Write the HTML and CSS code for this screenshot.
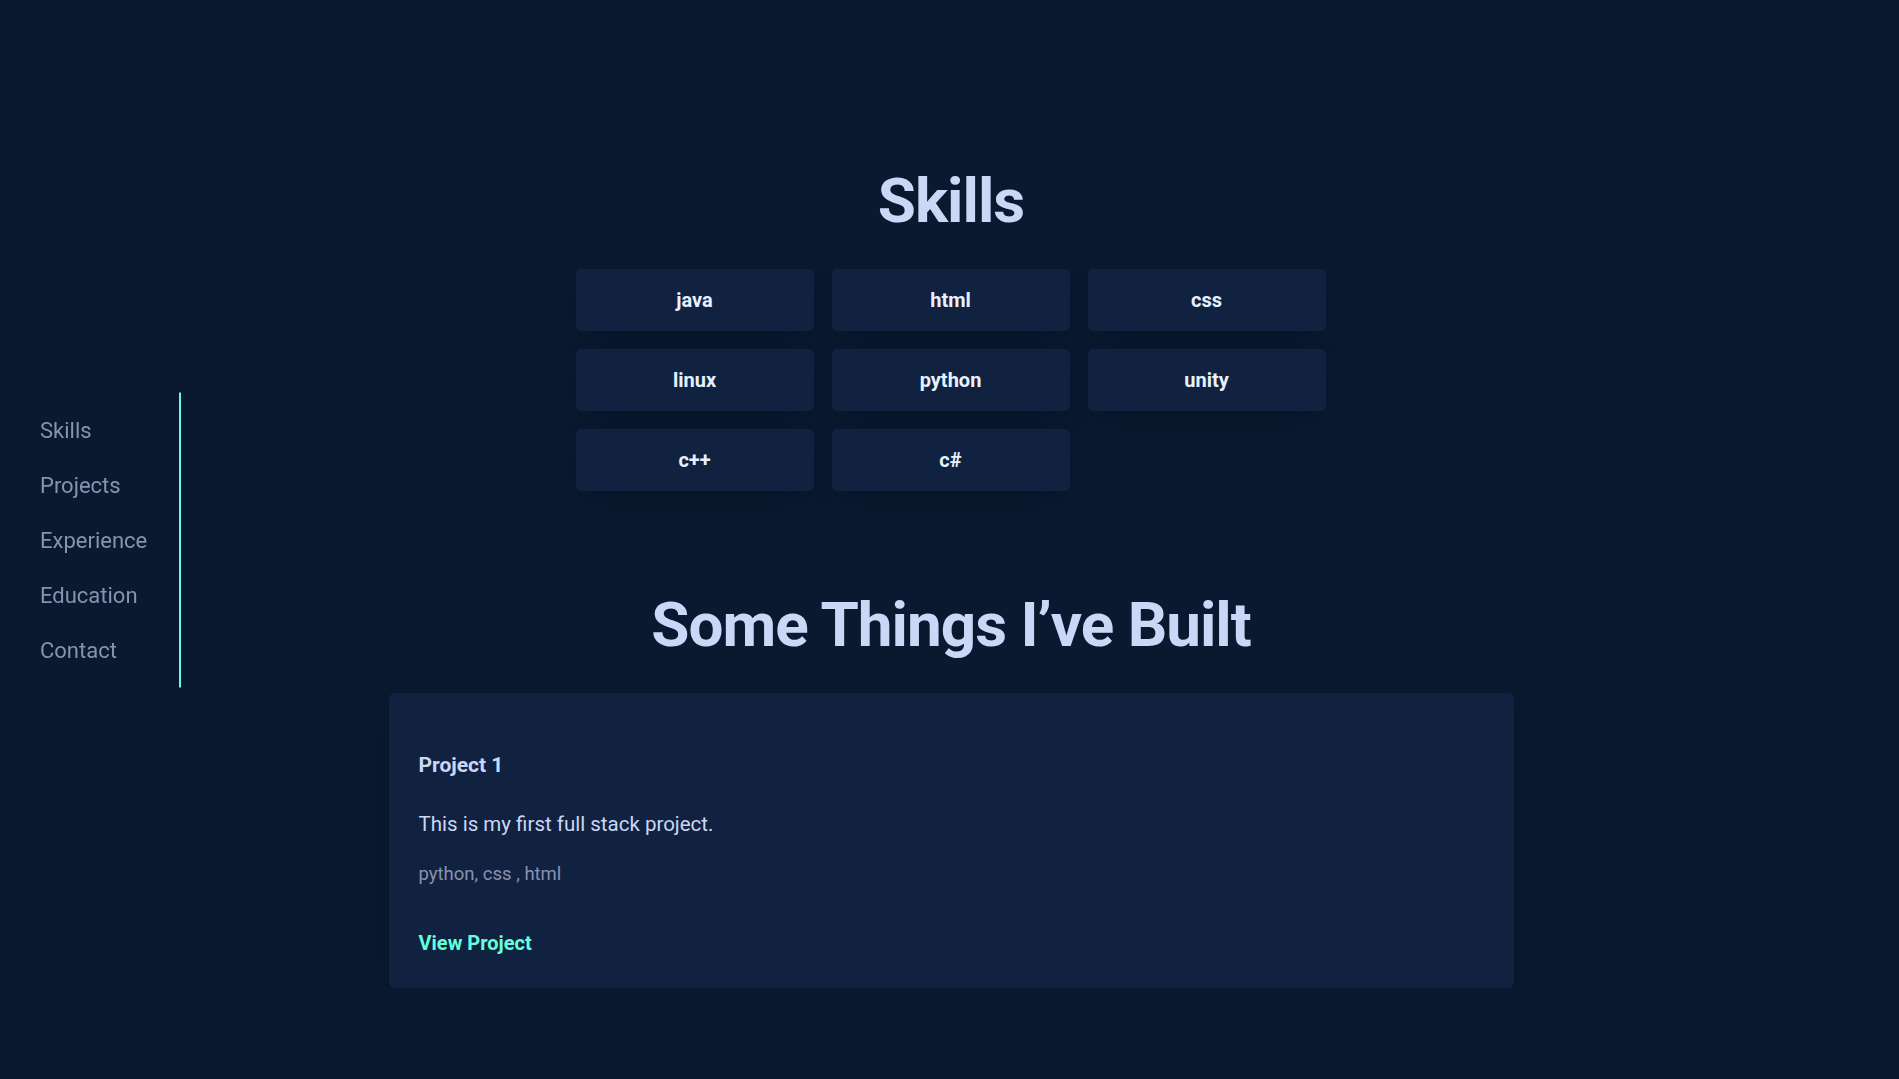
FILE: index.html
```html
<!DOCTYPE html>
<html lang="en">
<head>
<meta charset="utf-8">
<title>Portfolio</title>
<link rel="stylesheet" href="styles.css">
</head>
<body>
<nav class="side-nav">
  <ul class="side-list">
    <li><a href="#skills">Skills</a></li>
    <li><a href="#projects">Projects</a></li>
    <li><a href="#experience">Experience</a></li>
    <li><a href="#education">Education</a></li>
    <li><a href="#contact">Contact</a></li>
  </ul>
</nav>
<main class="main">
  <section class="section" id="skills">
    <h2 class="section-title">Skills</h2>
    <div class="skill-grid">
      <div class="skill">java</div>
      <div class="skill">html</div>
      <div class="skill">css</div>
      <div class="skill">linux</div>
      <div class="skill">python</div>
      <div class="skill">unity</div>
      <div class="skill">c++</div>
      <div class="skill">c#</div>
    </div>
  </section>
  <section class="section section-projects" id="projects">
    <h2 class="section-title">Some Things I’ve Built</h2>
    <article class="card">
      <h3 class="card-title">Project 1</h3>
      <p class="card-desc">This is my first full stack project.</p>
      <p class="card-tags">python, css , html</p>
      <a class="card-link" href="#">View Project</a>
    </article>
  </section>
</main>
</body>
</html>
```
FILE: styles.css
```css
* { box-sizing: border-box; }
html, body {
  margin: 0;
  padding: 0;
  background: #0a192f;
  font-family: Roboto, "Open Sans", sans-serif;
  color: #ccd6f6;
}
.side-nav {
  position: fixed;
  left: 0;
  top: 50%;
  transform: translateY(-50%);
  width: 181px;
  padding-left: 40px;
  border-right: 2px solid #64ffda;
}
.side-list {
  list-style: none;
  margin: 0;
  padding: 10px 0;
}
.side-list li {
  height: 55px;
  line-height: 55px;
  font-size: 22px;
}
.side-list a {
  color: #8892b0;
  text-decoration: none;
}
.main {
  display: flex;
  flex-direction: column;
  align-items: center;
  padding-top: 162px;
  padding-left: 3px;
}
.section {
  display: flex;
  flex-direction: column;
  align-items: center;
}
.section-projects { margin-top: 95px; }
.section-title {
  margin: 0 0 30px;
  font-size: 62px;
  line-height: 77px;
  font-weight: 700;
  color: #ccd6f6;
  letter-spacing: -1px;
}
.skill-grid {
  display: grid;
  grid-template-columns: repeat(3, 238px);
  gap: 18px;
  width: 751px;
}
.skill {
  height: 62px;
  display: flex;
  align-items: center;
  justify-content: center;
  background: #112240;
  border-radius: 5px;
  font-size: 20px;
  font-weight: 700;
  color: #e6f1ff;
  box-shadow: 0 10px 30px -15px rgba(2, 12, 27, 0.7);
}
.card {
  width: 1125px;
  background: #112240;
  border-radius: 6px;
  padding: 30px 30px 33px;
  box-shadow: 0 10px 30px -15px rgba(2, 12, 27, 0.7);
}
.card-title {
  margin: 30px 0 0;
  font-size: 21px;
  line-height: 25px;
  font-weight: 700;
  color: #ccd6f6;
}
.card-desc {
  margin: 34px 0 0;
  font-size: 20.5px;
  line-height: 25px;
  color: #ccd6f6;
}
.card-tags {
  margin: 27px 0 0;
  font-size: 18.5px;
  line-height: 20px;
  color: #8892b0;
}
.card-link {
  display: block;
  margin-top: 47px;
  font-size: 20px;
  line-height: 24px;
  font-weight: 700;
  color: #64ffda;
  text-decoration: none;
}
```
